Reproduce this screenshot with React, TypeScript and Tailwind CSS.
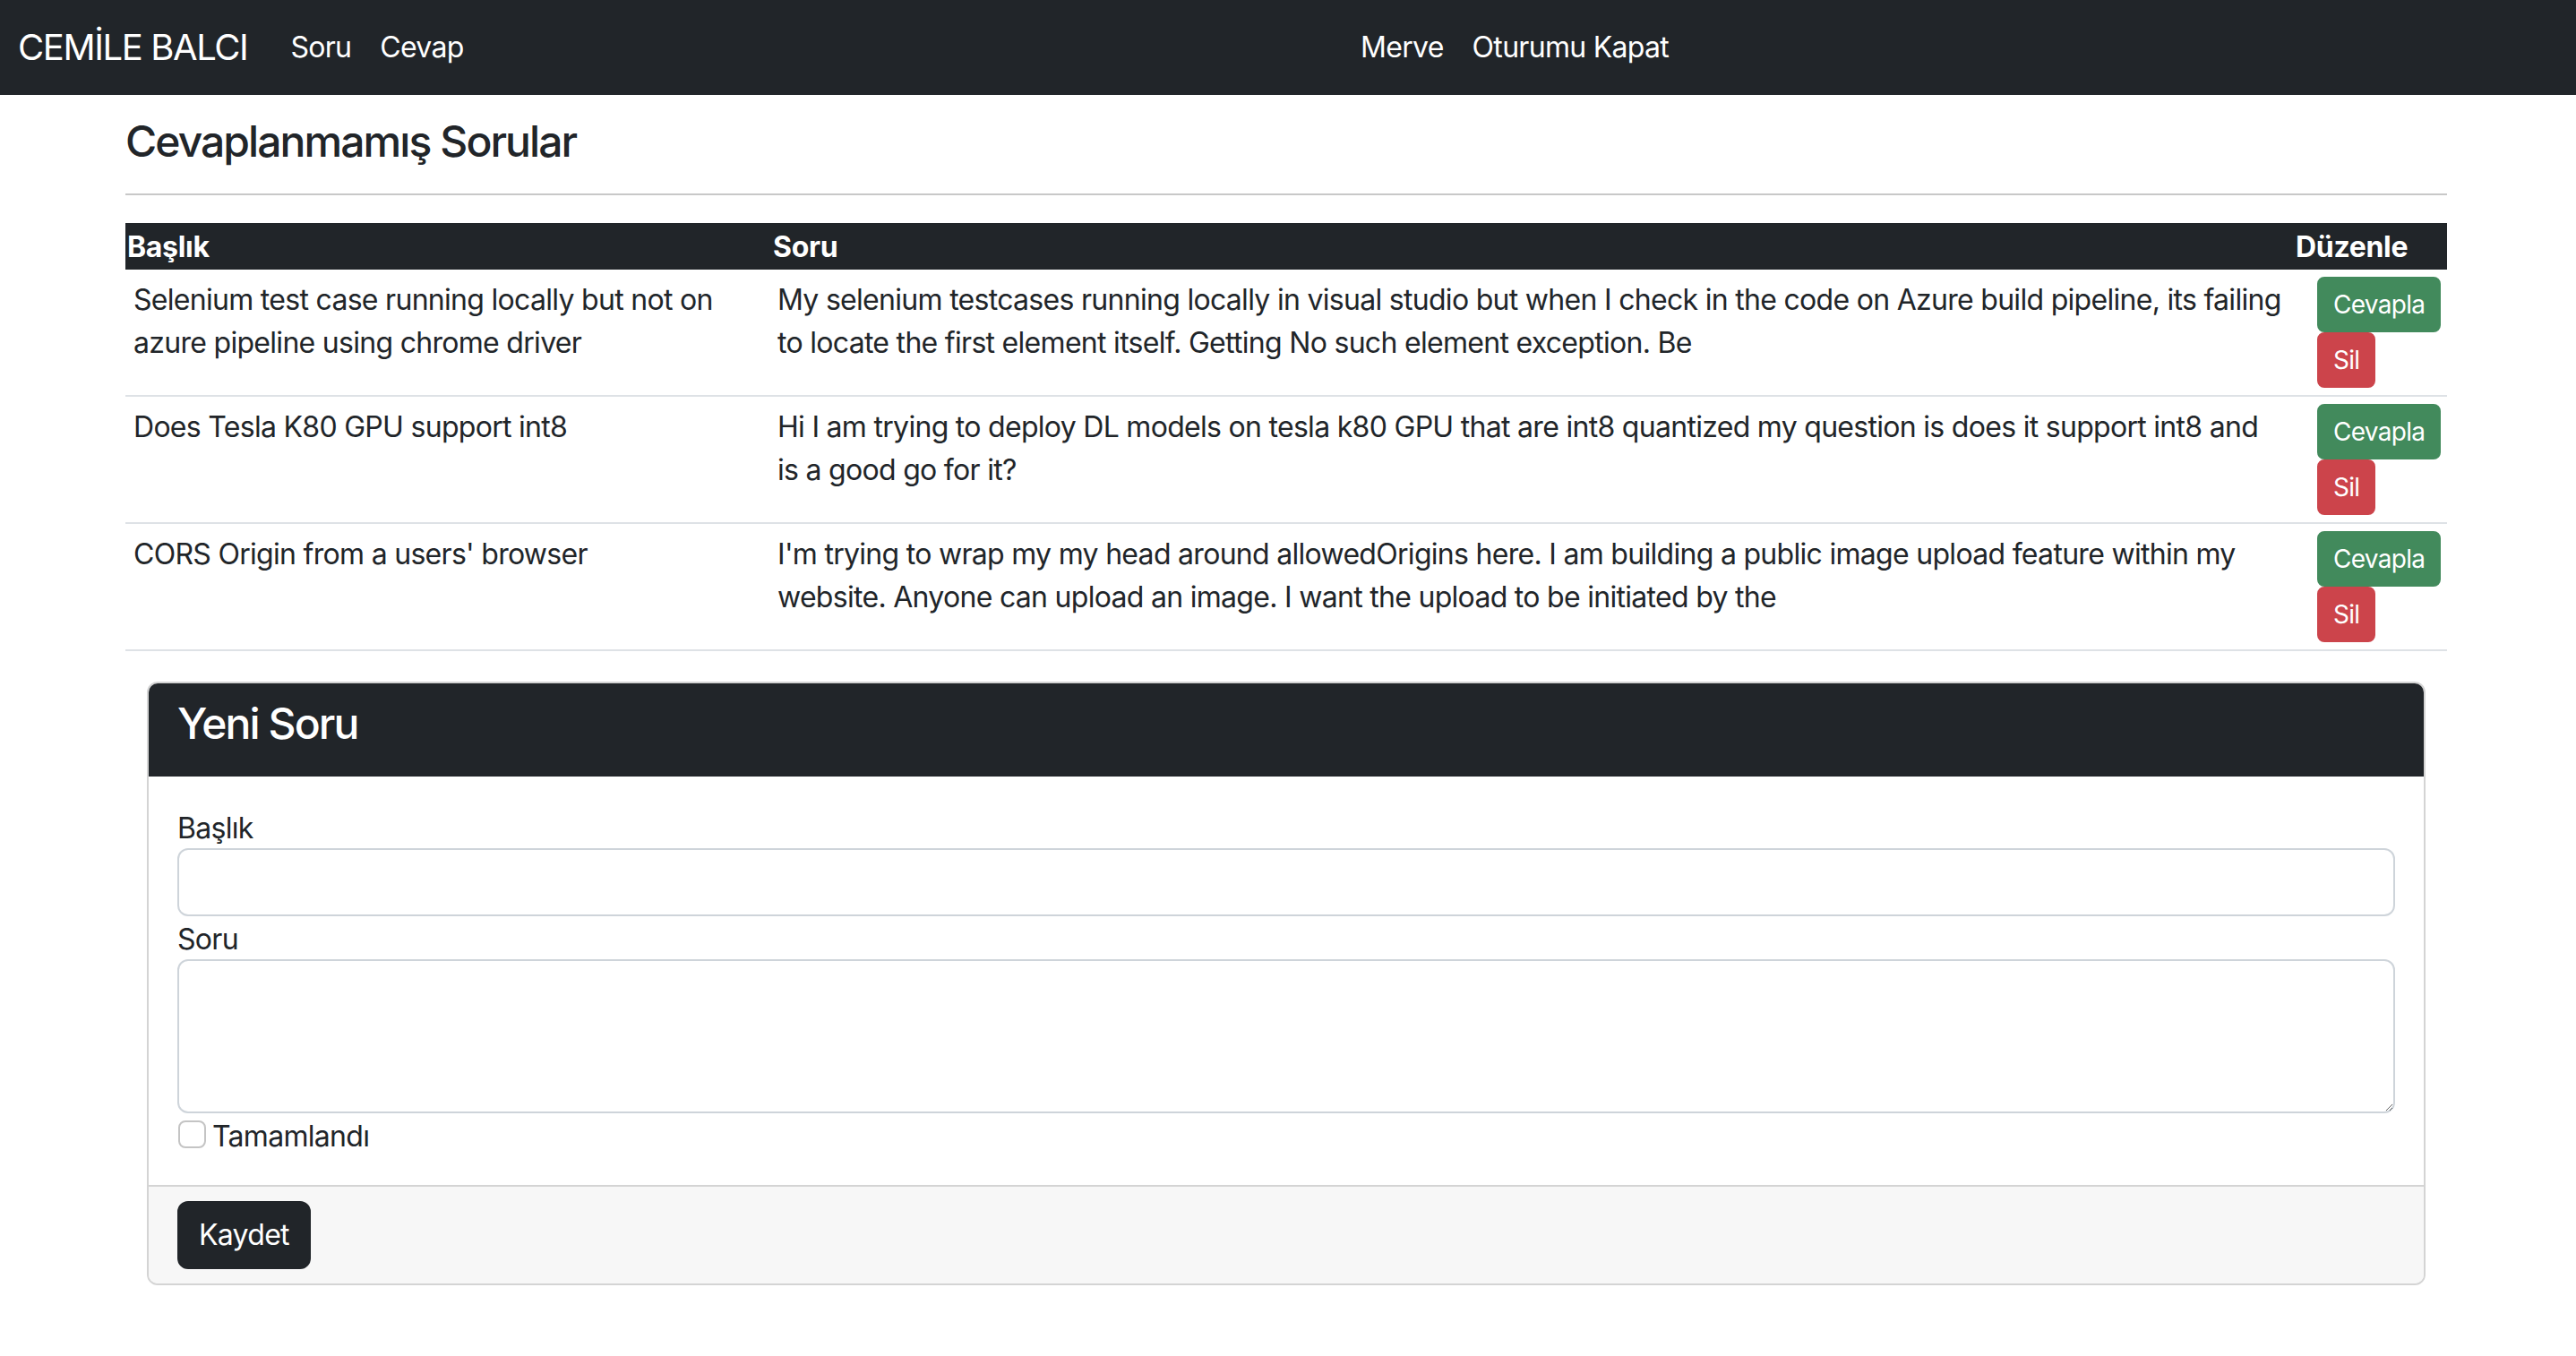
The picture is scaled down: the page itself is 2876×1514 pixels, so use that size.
import React from "react";

const rows = [
  {
    title: ["Selenium test case running locally but not on", "azure pipeline using chrome driver"],
    body: [
      "My selenium testcases running locally in visual studio but when I check in the code on Azure build pipeline, its failing",
      "to locate the first element itself. Getting No such element exception. Be",
    ],
  },
  {
    title: ["Does Tesla K80 GPU support int8"],
    body: [
      "Hi I am trying to deploy DL models on tesla k80 GPU that are int8 quantized my question is does it support int8 and",
      "is a good go for it?",
    ],
  },
  {
    title: ["CORS Origin from a users' browser"],
    body: [
      "I'm trying to wrap my my head around allowedOrigins here. I am building a public image upload feature within my",
      "website. Anyone can upload an image. I want the upload to be initiated by the",
    ],
  },
];

export default function App() {
  return (
    <div className="min-h-screen bg-white font-['Inter',sans-serif] text-[#212529] text-[32px] leading-[48px] tracking-[-0.022em]">
      <nav className="h-[106px] bg-[#212529] flex items-center text-white">
        <div className="w-[1503px] flex items-center pl-[20px]">
          <span className="text-[40px] leading-[60px] tracking-[-0.035em]">CEMİLE BALCI</span>
          <div className="ml-[32px] flex">
            <a className="px-[16px] text-[32px] leading-[48px]">Soru</a>
            <a className="px-[16px] text-[32px] leading-[48px]">Cevap</a>
          </div>
        </div>
        <div className="flex">
          <a className="px-[16px] text-[32px] leading-[48px]">Merve</a>
          <a className="px-[16px] text-[32px] leading-[48px]">Oturumu Kapat</a>
        </div>
      </nav>

      <main className="ml-[140px] w-[2592px]">
        <h4 className="mt-[23px] text-[48px] leading-[58px] font-medium tracking-[-0.04em]">Cevaplanmamış Sorular</h4>
        <hr className="mt-[29px] border-0 border-t-2 border-[#c8c8c8]" />

        <div className="mt-[31px]">
          <div className="grid grid-cols-[721px_1700px_171px] bg-[#212529] text-white font-bold h-[52px] items-center pt-[2px] tracking-[-0.01em]">
            <div className="pl-[2px]">Başlık</div>
            <div className="pl-[2px]">Soru</div>
            <div className="pl-[2px]">Düzenle</div>
          </div>
          {rows.map((r, i) => (
            <div
              key={i}
              className="grid grid-cols-[721px_1700px_171px] border-b-2 border-[#dee2e6] py-[8px]"
            >
              <div className="pl-[9px] pt-[2px] whitespace-nowrap">
                {r.title.map((t, j) => (
                  <div key={j}>{t}</div>
                ))}
              </div>
              <div className="pl-[7px] pt-[2px] whitespace-nowrap">
                {r.body.map((t, j) => (
                  <div key={j}>{t}</div>
                ))}
              </div>
              <div className="pl-[26px] flex flex-col items-start">
                <button className="h-[62px] px-[16px] border-2 border-[#428a5c] bg-[#428a5c] text-white text-[28px] leading-[42px] rounded-[8px]">
                  Cevapla
                </button>
                <button className="h-[62px] px-[16px] border-2 border-[#cc444b] bg-[#cc444b] text-white text-[28px] leading-[42px] rounded-[8px]">
                  Sil
                </button>
              </div>
            </div>
          ))}
        </div>

        <div className="mt-[34px] mx-[24px] border-2 border-[#d4d4d4] rounded-[12px] overflow-hidden">
          <div className="bg-[#212529] text-white px-[32px] pt-[16px] pb-[14px]">
            <h4 className="text-[48px] leading-[58px] font-medium mb-[16px] tracking-[-0.04em]">Yeni Soru</h4>
          </div>
          <div className="px-[32px] pt-[32px] pb-[32px]">
            <label className="block pt-[2px] h-[48px]">Başlık</label>
            <input className="block w-full h-[76px] border-2 border-[#ced4da] rounded-[12px] px-[24px] outline-none" />
            <label className="block pt-[2px] h-[48px]">Soru</label>
            <textarea className="block w-full h-[172px] border-2 border-[#ced4da] rounded-[12px] px-[24px] py-[12px] outline-none" />
            <div className="flex items-start h-[48px]">
              <span className="mt-[8px] ml-[1px] w-[31px] h-[31px] border-2 border-[#c4c4c4] rounded-[8px] bg-white" />
              <span className="ml-[7px] pt-[2px]">Tamamlandı</span>
            </div>
          </div>
          <div className="bg-[#f7f7f7] border-t-2 border-[#d4d4d4] px-[32px] py-[16px]">
            <button className="h-[76px] px-[22px] border-2 border-[#212529] bg-[#212529] text-white rounded-[12px] text-[32px] leading-[48px]">
              Kaydet
            </button>
          </div>
        </div>
      </main>
    </div>
  );
}
